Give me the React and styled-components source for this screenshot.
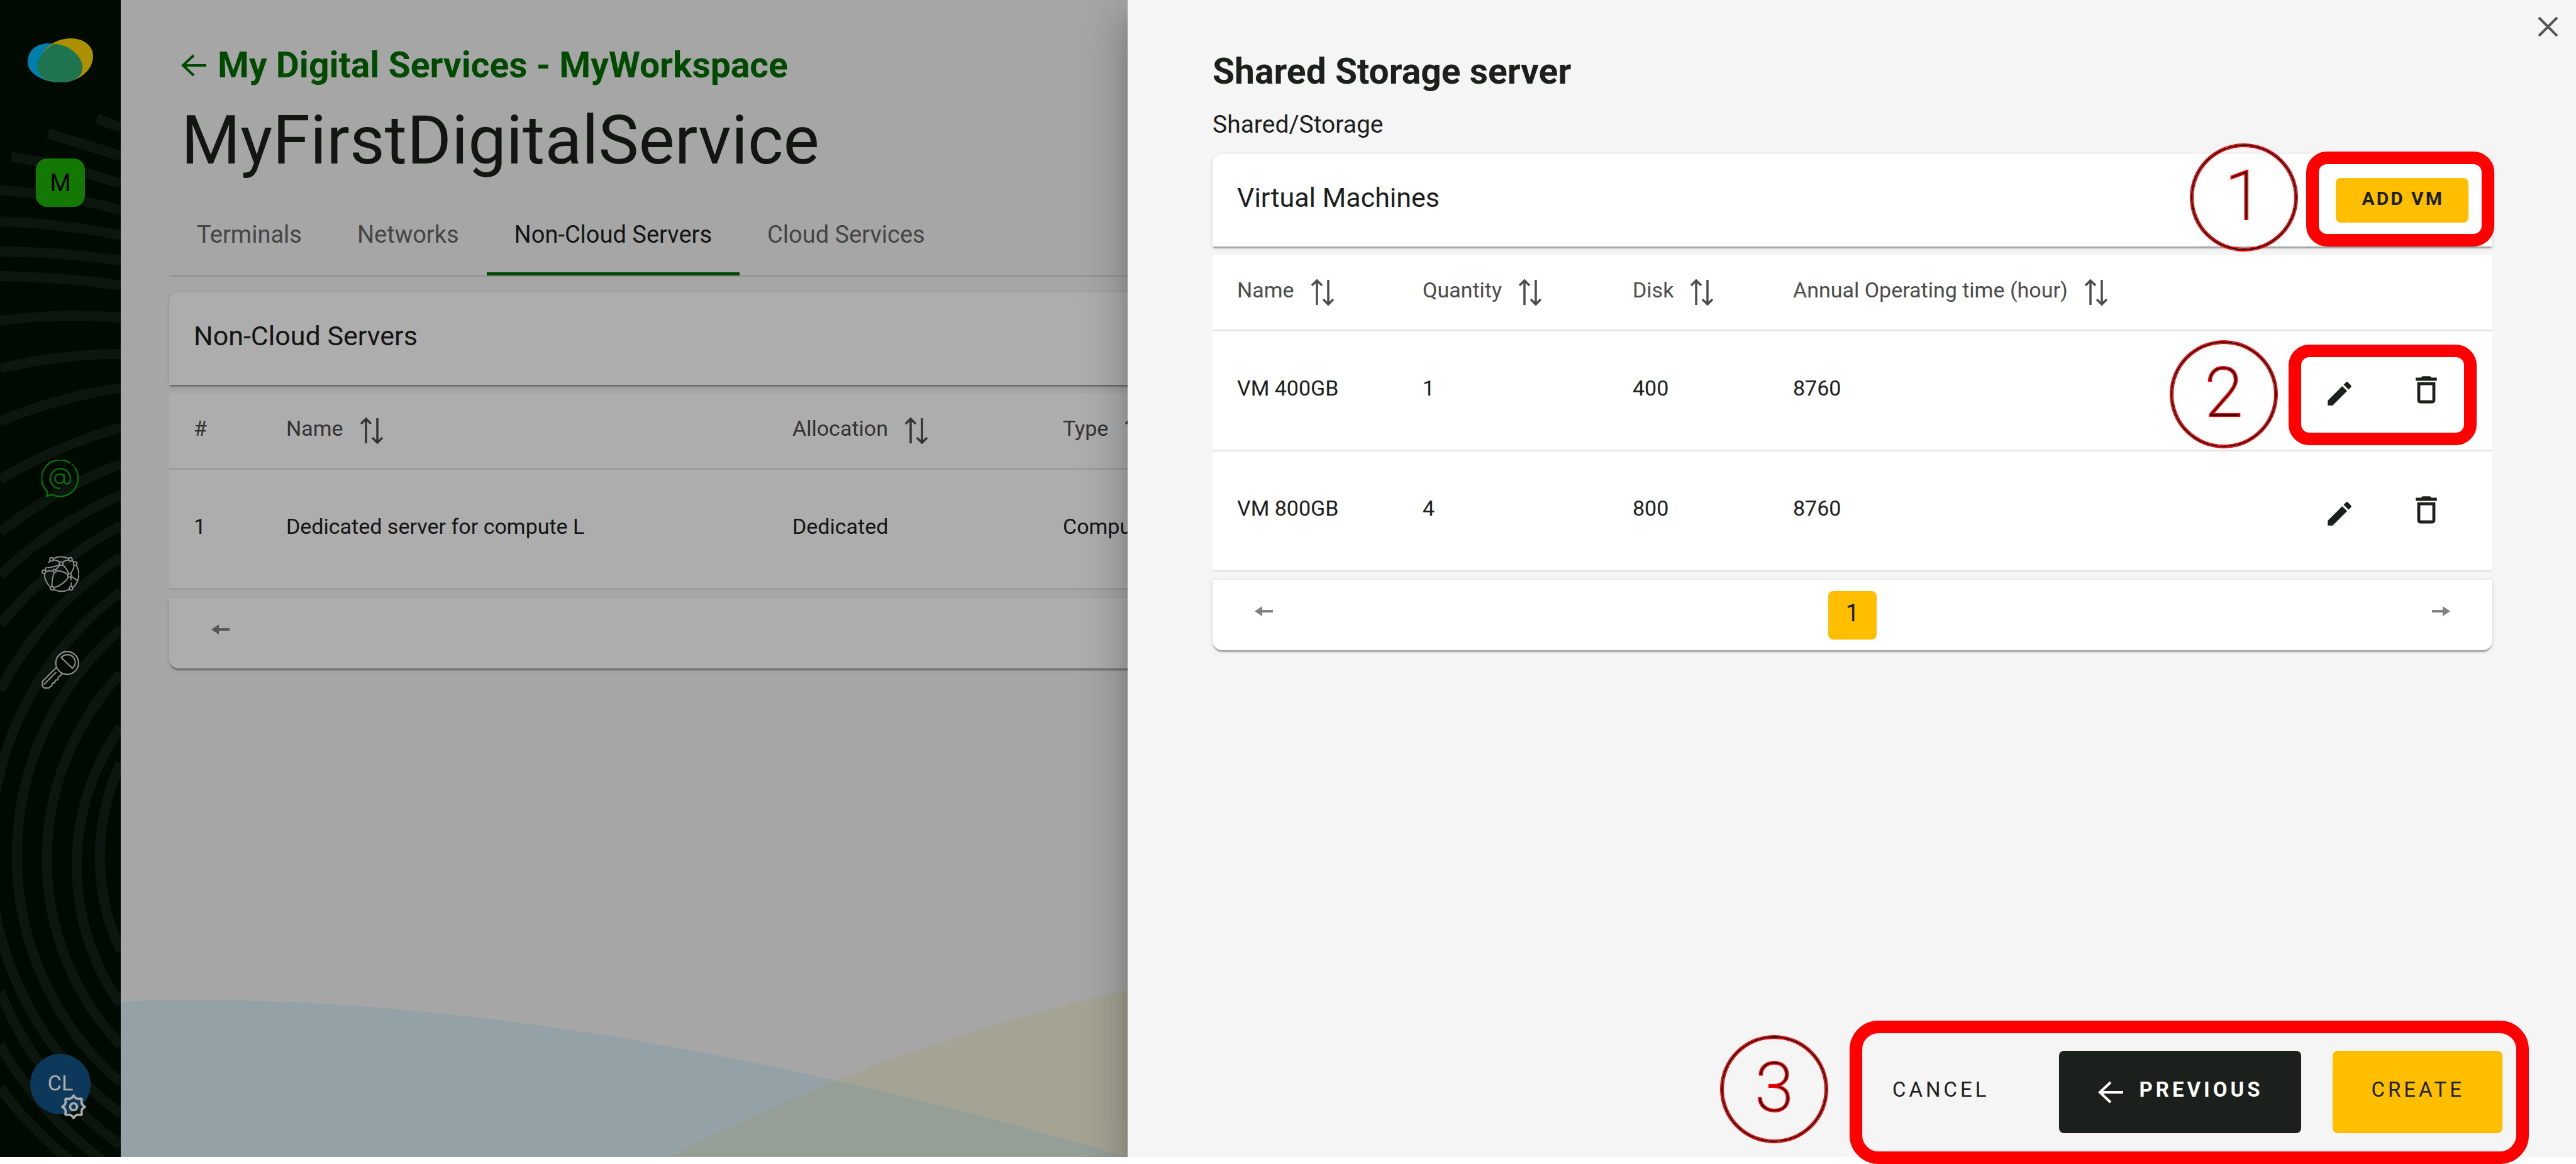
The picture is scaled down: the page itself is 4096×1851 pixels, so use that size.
import React from "react";
import styled, { createGlobalStyle, css } from "styled-components";

const ink = "#1c201d";
const muted = "#4c4c4c";
const amber = "#ffbf00";

const GlobalStyle = createGlobalStyle`
  *, *::before, *::after { box-sizing: border-box; }
  body {
    margin: 0;
    background: #fff;
    color: ${ink};
    font-family: Roboto, "Liberation Sans", sans-serif;
    font-size: 34px;
  }
  button { font: inherit; color: inherit; border: 0; padding: 0; background: none; cursor: pointer; }
  a { color: inherit; text-decoration: none; }
  h1, h2, p { margin: 0; }
  svg { display: block; flex: none; }
`;

/* ---------- shell ---------- */

const Screen = styled.div`
  position: relative;
  min-height: 100vh;
`;

const Shell = styled.div`
  position: relative;
  display: flex;
  min-height: calc(100vh - 11px);
  overflow: hidden;
  background: #f5f5f5;
`;

const Scrim = styled.div`
  position: absolute;
  inset: 0;
  background: rgba(0, 0, 0, 0.32);
`;

/* ---------- sidebar ---------- */

const Sidebar = styled.nav`
  position: relative;
  flex: none;
  width: 192px;
  padding: 61px 0 68px;
  display: flex;
  flex-direction: column;
  align-items: center;
  background: #000f00;
`;

const Stripes = styled.svg`
  position: absolute;
  inset: 0;
`;

const SideTop = styled.div`
  position: relative;
  display: flex;
  flex-direction: column;
  align-items: center;
  gap: 121px;
`;

const WorkspaceButton = styled.button`
  width: 78px;
  height: 77px;
  border-radius: 18px;
  background: #1db307;
  color: #000;
  font-size: 38px;
`;

const SideLinks = styled.div`
  position: relative;
  display: flex;
  flex-direction: column;
  gap: 92px;
  margin-top: 402px;
`;

const SideLink = styled.a`
  color: ${(p) => (p.$active ? "#00b300" : "#d6d6d6")};
`;

const Account = styled.button`
  position: relative;
  width: 96px;
  height: 96px;
  margin-top: auto;
  padding-bottom: 4px;
  border-radius: 50%;
  background: #135587;
  color: #fff;
`;

const AccountGear = styled.span`
  position: absolute;
  right: 7px;
  bottom: -8px;
`;

/* ---------- page ---------- */

const Main = styled.main`
  position: relative;
  flex: 1;
  min-width: 0;
  padding: 71px 77px 0;
`;

const Waves = styled.svg`
  position: absolute;
  left: 0;
  bottom: 0;
`;

const PageHeader = styled.header`
  padding-left: 19px;
  display: flex;
  flex-direction: column;
  align-items: flex-start;
  gap: 24px;
`;

const BackLink = styled.a`
  display: flex;
  align-items: center;
  gap: 18px;
  color: #006d00;
  font-size: 57px;
  font-weight: 700;
  line-height: 66px;
`;

const PageTitle = styled.h1`
  font-size: 108px;
  font-weight: 400;
  line-height: 124px;
`;

const Tabs = styled.div`
  display: flex;
  margin: 40px 0 25px;
  border-bottom: 2px solid #d6d6d6;
`;

const Tab = styled.button`
  padding: 26px 44px 38px;
  border-bottom: 5px solid ${(p) => (p.$active ? "#006d00" : "transparent")};
  color: ${(p) => (p.$active ? ink : "#666")};
  font-size: 38px;
  line-height: 44px;
`;

/* ---------- cards and tables ---------- */

const raised = css`
  box-shadow: 0 5px 2px -2px rgba(0, 0, 0, 0.2), 0 2px 2px 0 rgba(0, 0, 0, 0.14), 0 2px 7px 0 rgba(0, 0, 0, 0.12);
`;

const CardStack = styled.section`
  position: relative;
  display: flex;
  flex-direction: column;
  gap: 13px;
`;

const CardHeader = styled.header`
  ${raised}
  display: flex;
  align-items: center;
  justify-content: space-between;
  height: 147px;
  padding: 0 38px 0 39px;
  border-radius: 15px 15px 0 0;
  background: #fff;
`;

const CardTitle = styled.h2`
  padding-bottom: 9px;
  font-size: 43px;
  font-weight: 400;
  line-height: 50px;
`;

const Table = styled.table`
  width: 100%;
  table-layout: fixed;
  border-collapse: separate;
  border-spacing: 0;
  background: #fff;
`;

const Col = styled.col`
  width: ${(p) => (p.$w ? `${p.$w}px` : "auto")};
`;

const HeadCell = styled.th`
  height: 122px;
  padding: 0 0 0 ${(p) => (p.$first ? 39 : 0)}px;
  border-bottom: 3px solid #e6e6e6;
  color: ${muted};
  font-weight: 400;
  text-align: left;
`;

const SortButton = styled.button`
  display: flex;
  align-items: center;
  gap: 26px;
  white-space: nowrap;
`;

const Label = styled.span`
  display: block;
  padding-bottom: 8px;
  line-height: 40px;
`;

const Cell = styled.td`
  height: 191px;
  padding: 0 0 8px ${(p) => (p.$first ? 39 : 0)}px;
  border-bottom: 3px solid #e6e6e6;
  white-space: nowrap;
`;

const ActionCell = styled.td`
  padding: 0 40px 0 0;
  border-bottom: 3px solid #e6e6e6;
`;

const Actions = styled.div`
  display: flex;
  justify-content: flex-end;
  gap: 8px;
`;

const IconButton = styled.button`
  display: flex;
  align-items: center;
  justify-content: center;
  width: 130px;
  height: 120px;
`;

const Pager = styled.footer`
  ${raised}
  display: flex;
  align-items: center;
  justify-content: space-between;
  height: 112px;
  padding: 0 67px;
  border-radius: 0 0 15px 15px;
  background: #fff;
  color: #808080;
`;

const PagerArrow = styled.button`
  padding-bottom: 12px;
`;

const PageNumber = styled.button`
  width: 77px;
  height: 77px;
  padding-bottom: 6px;
  border-radius: 8px;
  background: ${amber};
  color: ${ink};
  font-size: 38px;
`;

/* ---------- drawer ---------- */

const Drawer = styled.aside`
  position: absolute;
  inset: 0 0 0 auto;
  width: calc(100% - 1793px);
  display: flex;
  flex-direction: column;
  padding: 81px 133px 38px 135px;
  background: #f5f5f5;
  box-shadow: 0 19px 24px -12px rgba(0, 0, 0, 0.2), 0 38px 58px 5px rgba(0, 0, 0, 0.14), 0 14px 72px 12px rgba(0, 0, 0, 0.12);
`;

const CloseButton = styled.button`
  position: absolute;
  top: 26px;
  right: 28px;
  color: #555;
`;

const DrawerTitle = styled.h2`
  font-size: 57px;
  font-weight: 700;
  line-height: 66px;
`;

const DrawerPath = styled.p`
  margin: 28px 0 24px;
  font-size: 39px;
  line-height: 46px;
`;

const AddButton = styled.button`
  height: 71px;
  padding: 0 39px 6px 42px;
  border-radius: 8px;
  background: ${amber};
  font-size: 30px;
  font-weight: 700;
  letter-spacing: 3px;
`;

const DrawerFooter = styled.footer`
  display: flex;
  justify-content: flex-end;
  gap: 50px;
  margin: auto -16px 0 0;
`;

const tones = {
  plain: css`background: none; color: ${ink};`,
  dark: css`background: ${ink}; color: #fff; font-weight: 700;`,
  amber: css`background: ${amber}; color: ${ink};`,
};

const ActionButton = styled.button`
  display: flex;
  align-items: center;
  gap: 26px;
  height: 131px;
  padding: 0 60px 0 62px;
  border-radius: 8px;
  font-size: 33px;
  letter-spacing: 5px;
  ${(p) => tones[p.$tone]}
`;

/* ---------- numbered callouts ---------- */

const Frame = styled.div`
  position: absolute;
  top: ${(p) => p.$top}px;
  right: ${(p) => p.$right}px;
  width: ${(p) => p.$w}px;
  height: ${(p) => p.$h}px;
  border: 20px solid #f00;
  border-radius: ${(p) => p.$r}px;
  pointer-events: none;
`;

const Marker = styled.div`
  position: absolute;
  top: ${(p) => p.$top}px;
  right: ${(p) => p.$right}px;
  display: flex;
  align-items: center;
  justify-content: center;
  width: 168px;
  height: 168px;
  padding-bottom: 4px;
  border: 2px solid #000;
  border-radius: 50%;
  box-shadow: 0 0 0 2px #f00, inset 0 0 0 2px #f00;
  color: #000;
  font: 200 110px/1 Roboto, "Liberation Sans", sans-serif;
  -webkit-text-stroke: 2px #f00;
  pointer-events: none;
`;

/* ---------- drawings ---------- */

const Logo = () => (
  <svg width="104" height="70" viewBox="0 0 112 70" preserveAspectRatio="none" aria-hidden="true">
    <path d="M0 38C0 18 16 8 36 8c30 0 58 22 58 42 0 12-16 20-38 20C26 70 0 56 0 38z" fill="#00bcff" />
    <path d="M18 48C18 20 44 0 74 0c22 0 38 12 38 28 0 24-26 42-56 42-22 0-38-8-38-22z" fill="#ffd400" />
    <path d="M44 9C28 18 16 32 16 46c0 14 18 24 40 24s38-8 38-24C94 28 68 8 44 9z" fill="#2eac77" />
  </svg>
);

const stripePaths = [
  "M154 188L192 203",
  "M76 212L192 248",
  "M18 249Q110 264 192 292",
  "M0 302Q100 310 192 334",
  "M0 352Q100 356 192 374",
  "M0 400A1400 1400 0 0 1 192 414",
  "M0 439A1400 1400 0 0 1 192 454",
  "M0 510A900 900 0 0 1 192 505",
  "M0 586A800 800 0 0 1 192 563",
  "M0 670A800 800 0 0 1 192 617",
  "M0 763A780 780 0 0 1 192 680",
  "M0 846A740 740 0 0 1 192 738",
  "M0 915A660 660 0 0 1 192 787",
  "M0 994A610 610 0 0 1 192 836",
  "M0 1098A567 567 0 0 1 192 886",
  "M0 1730A636 636 0 0 0 118 1850",
  "M0 1662A600 600 0 0 0 170 1850",
  "M0 1577A560 560 0 0 0 192 1821",
  "M192 941A518 518 0 0 0 192 1771",
  "M192 1000A477 477 0 0 0 192 1722",
  "M192 1071A430 430 0 0 0 192 1662",
  "M192 1156A384 384 0 0 0 192 1598",
  "M192 1214A350 350 0 0 0 192 1512",
];

const SidebarStripes = () => (
  <Stripes width="192" height="1840" viewBox="0 0 192 1840" fill="none" stroke="#131f15" strokeWidth="16" aria-hidden="true">
    {stripePaths.map((d) => <path key={d} d={d} />)}
  </Stripes>
);

const bluePath = "M0 25C500 5 1050 110 1601 272H0z";
const sandPath = "M871 272C1110 150 1330 70 1601 6L1700 -18V272z";

const BottomWaves = () => (
  <Waves width="1700" height="272" viewBox="0 0 1700 272" aria-hidden="true">
    <clipPath id="blueWave"><path d={bluePath} /></clipPath>
    <path d={bluePath} fill="#dbedf7" />
    <path d={sandPath} fill="#f4f0d9" />
    <path d={sandPath} fill="#dceae0" clipPath="url(#blueWave)" />
  </Waves>
);

const ArrowLeft = () => (
  <svg width="40" height="36" viewBox="0 0 40 36" fill="none" stroke="currentColor" strokeWidth="4" aria-hidden="true">
    <path d="M40 18H3M20 2L3 18l17 16" />
  </svg>
);

const SortIcon = () => (
  <svg width="38" height="42" viewBox="0 0 38 42" fill="none" stroke="currentColor" strokeWidth="3.5" aria-hidden="true">
    <path d="M10 41V2M2 10l8-8 8 8M28 1v39M20 32l8 8 8-8" />
  </svg>
);

const PagerIcon = ({ next }) => (
  <svg width="29" height="16" viewBox="0 0 29 16" aria-hidden="true">
    <path d={next ? "M0 6h17V0l12 8-12 8v-6H0z" : "M29 6H12V0L0 8l12 8v-6h17z"} fill="currentColor" />
  </svg>
);

const PencilIcon = () => (
  <svg width="50" height="60" viewBox="0 -4.8 24 28.8" aria-hidden="true">
    <path d="M3 17.25V21h3.75L17.81 9.94l-3.75-3.75L3 17.25zM20.71 7.04a1 1 0 0 0 0-1.41l-2.34-2.34a1 1 0 0 0-1.41 0l-1.83 1.83 3.75 3.75 1.83-1.83z" fill="currentColor" />
  </svg>
);

const TrashIcon = () => (
  <svg width="58" height="60" viewBox="0 0 24 25" aria-hidden="true">
    <path d="M6 19c0 1.1.9 2 2 2h8c1.1 0 2-.9 2-2V7H6v12zM8 9h8v10H8V9zm7.5-5l-1-1h-5l-1 1H5v2h14V4h-3.5z" fill="currentColor" />
  </svg>
);

const CloseIcon = () => (
  <svg width="33" height="33" viewBox="0 0 33 33" stroke="currentColor" strokeWidth="4" aria-hidden="true">
    <path d="M2 2l29 29M31 2L2 31" />
  </svg>
);

const AtIcon = () => (
  <svg width="60" height="60" viewBox="0 0 64 64" fill="none" stroke="currentColor" strokeWidth="2.4" aria-hidden="true">
    <path d="M49 6A31 31 0 0 0 10 54L9 62l8-3A31 31 0 0 0 56 13" />
    <path d="M51.5 8l1.5 1.3M54 10.5l.8.9" strokeWidth="3" />
    <path d="M32 49a17 17 0 1 1 17-17c0 5-1 9-5 9s-6-2-6-6V24" />
    <circle cx="31" cy="32" r="8" />
  </svg>
);

const GlobeIcon = () => (
  <svg width="60" height="60" viewBox="0 0 64 64" fill="none" stroke="currentColor" strokeWidth="2" aria-hidden="true">
    <path d="M20 5.5A30 30 0 0 1 46 5.5M51 8l4 4M59 17A30 30 0 0 1 53 55M47 58A30 30 0 0 1 21 58M15.5 54A30 30 0 0 1 5 31M8.5 20l-3 5.5M14.5 9l-3 4" />
    <path d="M20 8q8 0 11 4.500M46 8q-8 1-10 4.500M7 27.500Q13 26 19.500 26.500M10 21Q24 20 31 15.500M24.500 24.500L31.500 16M36 16Q44 24 46 31.500M55.500 17Q54 25 49 31.500M25 26.500Q36 26 45 33M21.500 29Q17 42 18 53M20.500 55Q38 50 46 36.500M50 35.500L61 43M50 37v5M50.500 46v7" />
    <circle cx="17" cy="7" r="3" /><circle cx="49" cy="7" r="3" /><circle cx="57" cy="14" r="3" />
    <circle cx="4" cy="28" r="3" /><circle cx="33.5" cy="14" r="3" /><circle cx="47.5" cy="34" r="3" />
    <circle cx="22" cy="26.5" r="2.5" /><circle cx="18" cy="56" r="3" /><circle cx="50" cy="56" r="3" />
  </svg>
);

const KeyIcon = () => (
  <svg width="60" height="60" viewBox="0 0 64 64" fill="none" stroke="currentColor" strokeWidth="2.2" strokeLinejoin="round" aria-hidden="true">
    <circle cx="43.5" cy="20.5" r="19.3" />
    <path d="M33.500 11.500C40 4 50 6 54 11c5 6 4 13-1.500 18.500z" />
    <path d="M25.500 28L1.500 52v8l3 3h8l5-4 1-4 4-1 1-4 4-1 1-4L36 38M4 57l21-21" />
  </svg>
);

const GearIcon = () => (
  <svg width="40" height="40" viewBox="0 0 40 40" fill="none" stroke="#fff" strokeWidth="3.6" strokeLinejoin="round" aria-hidden="true">
    <path d="M17 6l3-4 3 4 4 1.500L32 7l1 1-.5 5 1.500 4 4 3-4 3-1.500 4 .5 5-1 1-5-.5-4 1.500-3 4-3-4-4-1.500L8 33l-1-1 .5-5L6 23l-4-3 4-3 1.500-4L7 8l1-1 5 .5z" />
    <circle cx="20" cy="20" r="5.5" />
  </svg>
);

/* ---------- content ---------- */

const tabs = ["Terminals", "Networks", "Non-Cloud Servers", "Cloud Services"];

const vms = [
  { name: "VM 400GB", quantity: 1, disk: 400, hours: 8760 },
  { name: "VM 800GB", quantity: 4, disk: 800, hours: 8760 },
];

const SortHead = ({ first, children }) => (
  <HeadCell $first={first} scope="col">
    <SortButton type="button"><Label>{children}</Label><SortIcon /></SortButton>
  </HeadCell>
);

const TablePager = () => (
  <Pager>
    <PagerArrow type="button" aria-label="Previous page"><PagerIcon /></PagerArrow>
    <PageNumber type="button">1</PageNumber>
    <PagerArrow type="button" aria-label="Next page"><PagerIcon next /></PagerArrow>
  </Pager>
);

export default function App() {
  return (
    <Screen>
      <GlobalStyle />
      <Shell>
        <Sidebar aria-label="Main">
          <SidebarStripes />
          <SideTop>
            <a href="#home" aria-label="Home"><Logo /></a>
            <WorkspaceButton type="button">M</WorkspaceButton>
          </SideTop>
          <SideLinks>
            <SideLink href="#services" $active aria-label="Digital services"><AtIcon /></SideLink>
            <SideLink href="#systems" aria-label="Information systems"><GlobeIcon /></SideLink>
            <SideLink href="#admin" aria-label="Administration"><KeyIcon /></SideLink>
          </SideLinks>
          <Account type="button">CL<AccountGear><GearIcon /></AccountGear></Account>
        </Sidebar>

        <Main>
          <BottomWaves />
          <PageHeader>
            <BackLink href="#back"><ArrowLeft />My Digital Services - MyWorkspace</BackLink>
            <PageTitle>MyFirstDigitalService</PageTitle>
          </PageHeader>
          <Tabs role="tablist">
            {tabs.map((name, i) => (
              <Tab key={name} type="button" role="tab" aria-selected={i === 2} $active={i === 2}>{name}</Tab>
            ))}
          </Tabs>
          <CardStack>
            <CardHeader><CardTitle>Non-Cloud Servers</CardTitle></CardHeader>
            <Table>
              <colgroup><Col $w={186} /><Col $w={805} /><Col $w={430} /><Col /></colgroup>
              <thead>
                <tr>
                  <HeadCell $first scope="col"><Label>#</Label></HeadCell>
                  <SortHead>Name</SortHead>
                  <SortHead>Allocation</SortHead>
                  <SortHead>Type</SortHead>
                </tr>
              </thead>
              <tbody>
                <tr>
                  <Cell $first>1</Cell>
                  <Cell>Dedicated server for compute L</Cell>
                  <Cell>Dedicated</Cell>
                  <Cell>Compute</Cell>
                </tr>
              </tbody>
            </Table>
            <TablePager />
          </CardStack>
        </Main>

        <Scrim />

        <Drawer>
          <CloseButton type="button" aria-label="Close"><CloseIcon /></CloseButton>
          <DrawerTitle>Shared Storage server</DrawerTitle>
          <DrawerPath>Shared/Storage</DrawerPath>
          <CardStack>
            <CardHeader>
              <CardTitle>Virtual Machines</CardTitle>
              <AddButton type="button">ADD VM</AddButton>
            </CardHeader>
            <Table>
              <colgroup><Col $w={334} /><Col $w={334} /><Col $w={255} /><Col /><Col $w={400} /></colgroup>
              <thead>
                <tr>
                  <SortHead first>Name</SortHead>
                  <SortHead>Quantity</SortHead>
                  <SortHead>Disk</SortHead>
                  <SortHead>Annual Operating time (hour)</SortHead>
                  <HeadCell aria-label="Actions" />
                </tr>
              </thead>
              <tbody>
                {vms.map((vm) => (
                  <tr key={vm.name}>
                    <Cell $first>{vm.name}</Cell>
                    <Cell>{vm.quantity}</Cell>
                    <Cell>{vm.disk}</Cell>
                    <Cell>{vm.hours}</Cell>
                    <ActionCell>
                      <Actions>
                        <IconButton type="button" aria-label={`Edit ${vm.name}`}><PencilIcon /></IconButton>
                        <IconButton type="button" aria-label={`Delete ${vm.name}`}><TrashIcon /></IconButton>
                      </Actions>
                    </ActionCell>
                  </tr>
                ))}
              </tbody>
            </Table>
            <TablePager />
          </CardStack>
          <DrawerFooter>
            <ActionButton type="button" $tone="plain"><Label>CANCEL</Label></ActionButton>
            <ActionButton type="button" $tone="dark"><ArrowLeft /><Label>PREVIOUS</Label></ActionButton>
            <ActionButton type="button" $tone="amber"><Label>CREATE</Label></ActionButton>
          </DrawerFooter>
        </Drawer>
      </Shell>

      <Marker $top={230} $right={444}>1</Marker>
      <Frame $top={241} $right={130} $w={299} $h={151} $r={33} />
      <Marker $top={543} $right={476}>2</Marker>
      <Frame $top={548} $right={158} $w={299} $h={160} $r={33} />
      <Marker $top={1648} $right={1191}>3</Marker>
      <Frame $top={1623} $right={75} $w={1080} $h={228} $r={46} />
    </Screen>
  );
}
